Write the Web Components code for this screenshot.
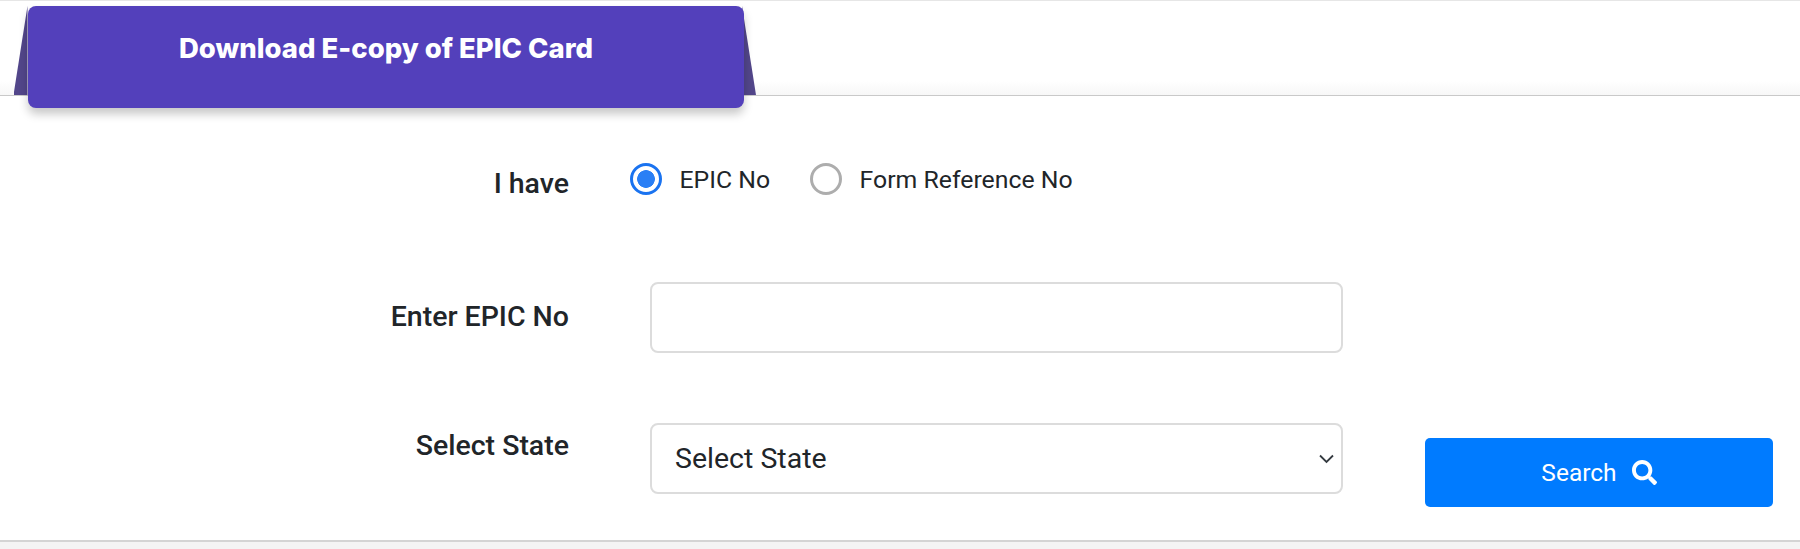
<!DOCTYPE html>
<html>
<head>
<meta charset="utf-8">
<title>Download E-copy of EPIC Card</title>
<style>
  html, body { margin: 0; height: 549px; overflow: hidden; background: #f4f4f4; }
  body { font-family: Roboto, "Liberation Sans", sans-serif; color: #212529; }
</style>
</head>
<body>
<epic-page>
  <epic-tab slot="tab">Download E-copy of EPIC Card</epic-tab>
  <epic-row label="I have" label-top="3" top="67">
    <epic-radio name="have" checked>EPIC No</epic-radio>
    <epic-radio name="have">Form Reference No</epic-radio>
  </epic-row>
  <epic-row label="Enter EPIC No" label-top="17" top="80">
    <epic-input></epic-input>
  </epic-row>
  <epic-row label="Select State" label-top="5" top="70">
    <epic-select>Select State</epic-select>
    <epic-search slot="action">Search</epic-search>
  </epic-row>
</epic-page>

<script>
const pageTemplate = document.createElement('template');
pageTemplate.innerHTML = `
  <style>
    :host { display: block; }
    .head {
      height: 95px;
      padding: 5px 0 0 28px;
      box-sizing: border-box;
      background: linear-gradient(#fff 85%, #f7f7f7);
      border-top: 1px solid #e6e6e6;
    }
    .card {
      height: 447px;
      box-sizing: border-box;
      background: #fff;
      border-top: 1px solid #c9c9c9;
      border-bottom: 2px solid #d4d4d4;
    }
  </style>
  <div class="head"><slot name="tab"></slot></div>
  <div class="card"><slot></slot></div>
`;
class EpicPage extends HTMLElement {
  constructor() {
    super();
    this.attachShadow({ mode: 'open' });
    this.shadowRoot.append(pageTemplate.content.cloneNode(true));
  }
}
customElements.define('epic-page', EpicPage);

const tabTemplate = document.createElement('template');
tabTemplate.innerHTML = `
  <style>
    :host {
      display: block;
      position: relative;
      z-index: 2;
      width: 716px;
      height: 102px;
    }
    .fold {
      position: absolute;
      top: 0;
      width: 14px;
      height: 89px;
      background: #52468a;
    }
    .left { left: -14.5px; clip-path: polygon(100% 0, 100% 100%, 0 100%); }
    .right { right: -12px; clip-path: polygon(0 0, 100% 100%, 0 100%); }
    .title {
      position: relative;
      height: 100%;
      box-sizing: border-box;
      padding-top: 20px;
      text-align: center;
      background: #5340bb;
      border-radius: 8px;
      box-shadow: 0 6px 10px rgba(0, 0, 0, .22);
      color: #fff;
      font: 800 27.5px/44px Inter, sans-serif;
    }
  </style>
  <div class="fold left"></div>
  <div class="fold right"></div>
  <div class="title"><slot></slot></div>
`;
class EpicTab extends HTMLElement {
  constructor() {
    super();
    this.attachShadow({ mode: 'open' });
    this.shadowRoot.append(tabTemplate.content.cloneNode(true));
  }
}
customElements.define('epic-tab', EpicTab);

const rowTemplate = document.createElement('template');
rowTemplate.innerHTML = `
  <style>
    :host { display: block; }
    .row {
      display: grid;
      grid-template-columns: 569px 693px 348px;
      align-items: start;
    }
    .label {
      text-align: right;
      font: 500 28.5px/36px Roboto, sans-serif;
      color: #212529;
    }
    .controls { display: flex; align-items: center; padding-left: 61px; margin-right: -61px; }
    .action { margin-left: 163px; }
  </style>
  <div class="row">
    <div class="label"></div>
    <div class="controls"><slot></slot></div>
    <div class="action"><slot name="action"></slot></div>
  </div>
`;
class EpicRow extends HTMLElement {
  constructor() {
    super();
    this.attachShadow({ mode: 'open' });
    this.shadowRoot.append(rowTemplate.content.cloneNode(true));
  }
  connectedCallback() {
    const label = this.shadowRoot.querySelector('.label');
    label.textContent = this.getAttribute('label');
    label.style.marginTop = this.getAttribute('label-top') + 'px';
    this.style.marginTop = this.getAttribute('top') + 'px';
  }
}
customElements.define('epic-row', EpicRow);

const radioTemplate = document.createElement('template');
radioTemplate.innerHTML = `
  <style>
    :host { display: inline-block; margin-right: 40px; }
    label { display: flex; align-items: center; gap: 17.5px; font: 400 24.8px/31px Roboto, sans-serif; color: #212529; }
    input {
      appearance: none;
      flex: none;
      width: 32px;
      height: 32px;
      margin: 0;
      border: 3.5px solid #adadad;
      border-radius: 50%;
      background: #fff;
      box-sizing: border-box;
    }
    input:checked {
      border-color: #1a73f0;
      background: radial-gradient(circle, #2a7ff5 0 8.5px, #fff 9.2px);
    }
  </style>
  <label><input type="radio"><span><slot></slot></span></label>
`;
class EpicRadio extends HTMLElement {
  constructor() {
    super();
    this.attachShadow({ mode: 'open' });
    this.shadowRoot.append(radioTemplate.content.cloneNode(true));
  }
  connectedCallback() {
    this.shadowRoot.querySelector('input').checked = this.hasAttribute('checked');
  }
}
customElements.define('epic-radio', EpicRadio);

const inputTemplate = document.createElement('template');
inputTemplate.innerHTML = `
  <style>
    :host { display: block; flex: none; width: 693px; margin-left: 20px; }
    input {
      display: block;
      width: 100%;
      height: 71px;
      box-sizing: border-box;
      border: 2px solid #dcdcdc;
      border-radius: 8px;
      background: #fff;
      outline: none;
    }
  </style>
  <input type="text" aria-label="Enter EPIC No">
`;
class EpicInput extends HTMLElement {
  constructor() {
    super();
    this.attachShadow({ mode: 'open' });
    this.shadowRoot.append(inputTemplate.content.cloneNode(true));
  }
}
customElements.define('epic-input', EpicInput);

const selectTemplate = document.createElement('template');
selectTemplate.innerHTML = `
  <style>
    :host {
      display: flex;
      flex: none;
      align-items: center;
      justify-content: space-between;
      width: 693px;
      height: 71px;
      margin-left: 20px;
      box-sizing: border-box;
      padding: 0 7px 0 23px;
      border: 2px solid #dcdcdc;
      border-radius: 8px;
      background: #fff;
      font: 400 28.5px/36px Roboto, sans-serif;
      color: #212529;
    }
    svg { width: 15px; height: 10px; display: block; }
  </style>
  <slot></slot>
  <svg viewBox="0 0 15 10"><path d="M1 1.5 L7.5 8 L14 1.5" fill="none" stroke="#343a40" stroke-width="1.8"/></svg>
`;
class EpicSelect extends HTMLElement {
  constructor() {
    super();
    this.attachShadow({ mode: 'open' });
    this.shadowRoot.append(selectTemplate.content.cloneNode(true));
  }
}
customElements.define('epic-select', EpicSelect);

const searchTemplate = document.createElement('template');
searchTemplate.innerHTML = `
  <style>
    :host { display: block; margin-top: 15px; }
    button {
      display: flex;
      align-items: center;
      justify-content: center;
      gap: 15px;
      width: 348px;
      height: 69px;
      border: none;
      border-radius: 5px;
      background: #007bff;
      color: #fff;
      font: 400 24.5px/30px Roboto, sans-serif;
      cursor: pointer;
    }
    svg { width: 25px; height: 25px; fill: #fff; display: block; }
  </style>
  <button><slot></slot><svg viewBox="0 0 512 512"><path d="M505 442.7L405.3 343c-4.5-4.5-10.6-7-17-7H372c27.6-35.3 44-79.7 44-128C416 93.1 322.9 0 208 0S0 93.1 0 208s93.1 208 208 208c48.3 0 92.7-16.4 128-44v16.3c0 6.4 2.5 12.5 7 17l99.7 99.7c9.4 9.4 24.6 9.4 33.9 0l28.3-28.3c9.4-9.4 9.4-24.6.1-34zM208 336c-70.7 0-128-57.2-128-128 0-70.7 57.2-128 128-128 70.7 0 128 57.2 128 128 0 70.7-57.2 128-128 128z"/></svg></button>
`;
class EpicSearch extends HTMLElement {
  constructor() {
    super();
    this.attachShadow({ mode: 'open' });
    this.shadowRoot.append(searchTemplate.content.cloneNode(true));
  }
}
customElements.define('epic-search', EpicSearch);
</script>
</body>
</html>
